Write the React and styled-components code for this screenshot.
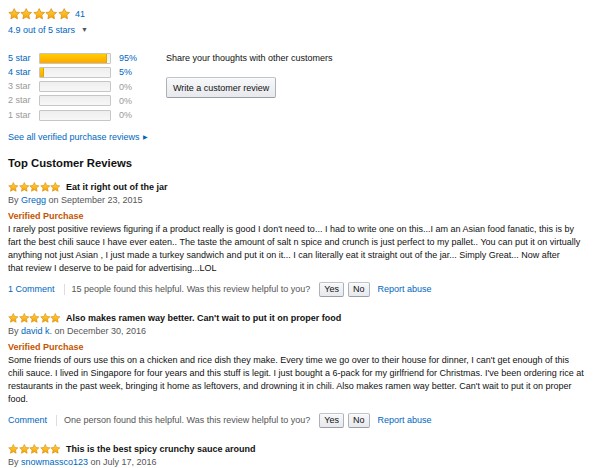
import React from "react";
import styled, { createGlobalStyle } from "styled-components";

const GlobalStyle = createGlobalStyle`
  body {
    margin: 0;
    background: #fff;
    font-family: "Liberation Sans", Arial, sans-serif;
    font-size: 9px;
    color: #111;
  }
`;

const Page = styled.div`
  width: 600px;
  box-sizing: border-box;
  padding: 6px 8px 0;
`;

const Link = styled.a`
  color: #0066c0;
  text-decoration: none;
  cursor: pointer;
`;

const StarLine = styled.div`
  display: flex;
  align-items: center;
  gap: 5px;
  height: 16px;
`;

const StarRow = styled.span`
  display: inline-flex;
  flex-shrink: 0;
`;

const RatingText = styled.div`
  margin-top: 1px;
  line-height: 13px;
  color: #0066c0;

  .caret {
    display: inline-block;
    margin-left: 6px;
    font-size: 7px;
    color: #555;
    vertical-align: 1px;
  }
`;

const Breakdown = styled.div`
  display: flex;
  gap: 7px;
  margin-top: 14px;
`;

const Histogram = styled.div`
  display: grid;
  grid-template-columns: 31px 72px 48px;
  grid-auto-rows: 14.25px;
  align-items: center;
`;

const HistLabel = styled.span`
  color: ${(p) => (p.$active ? "#0066c0" : "#999")};
  line-height: 13px;
`;

const Bar = styled.div`
  height: 11px;
  box-sizing: border-box;
  border: 1px solid #c6c6c6;
  border-radius: 1px;
  background: linear-gradient(#eee, #f7f7f7);
  overflow: hidden;
`;

const BarFill = styled.div`
  height: 100%;
  background: linear-gradient(#ffce00, #ffa700);
  border-right: 1px solid #e3a500;
  box-sizing: border-box;
`;

const Percent = styled.span`
  padding-left: 8px;
  color: ${(p) => (p.$active ? "#0066c0" : "#999")};
`;

const ShareBox = styled.div`
  display: flex;
  flex-direction: column;
  align-items: flex-start;

  p {
    margin: 0;
    line-height: 14px;
    color: #111;
  }
`;

const Button = styled.button`
  font-family: inherit;
  font-size: 9px;
  color: #111;
  height: ${(p) => (p.$small ? "15px" : "21px")};
  padding: ${(p) => (p.$small ? "0 4px" : "0 6px")};
  border: 1px solid #adb1b8;
  border-top-color: #c1c4c9;
  border-bottom-color: #9a9ea5;
  border-radius: 2px;
  background: linear-gradient(#f7f8fa, #e7e9ec);
  box-shadow: 0 1px 0 rgba(255, 255, 255, 0.6) inset;
  cursor: pointer;
  margin-top: ${(p) => (p.$small ? "0" : "12px")};
`;

const SeeAll = styled(Link)`
  display: block;
  margin-top: 9px;
  line-height: 13px;

  .arrow {
    font-size: 6px;
    margin-left: 3px;
    vertical-align: 1px;
  }
`;

const Heading = styled.h3`
  margin: 12px 0 0;
  font-size: 11.3px;
  line-height: 14px;
  font-weight: bold;
  color: #111;
`;

const ReviewList = styled.div`
  margin-top: 10px;
  display: flex;
  flex-direction: column;
  gap: 14px;
`;

const Review = styled.div``;

const TitleRow = styled.div`
  display: flex;
  align-items: center;
  gap: 5px;
  height: 14px;
  font-weight: bold;
`;

const Byline = styled.div`
  line-height: 13px;
  color: #555;
`;

const Verified = styled.div`
  margin-top: 3px;
  line-height: 13px;
  color: #c45500;
  font-weight: bold;
`;

const Body = styled.p`
  margin: 0;
  width: 580px;
  line-height: 13px;
  color: #111;
  white-space: pre-line;
`;

const Footer = styled.div`
  display: flex;
  align-items: center;
  height: 16px;
  margin-top: 6px;
  color: #555;
`;

const Divider = styled.span`
  width: 1px;
  height: 11px;
  background: #ddd;
  margin: 0 7px 0 9px;
`;

const Votes = styled.span`
  display: inline-flex;
  gap: 4px;
  margin: 0 8px 0 9px;
`;

const Star = ({ size }) => (
  <svg width={size} height={size * 0.92} viewBox="0 0 20 19">
    <defs>
      <linearGradient id="sg" x1="0" y1="0" x2="0" y2="1">
        <stop offset="0" stopColor="#ffd24a" />
        <stop offset="1" stopColor="#f5a300" />
      </linearGradient>
    </defs>
    <path
      d="M10 1l2.7 5.7 6.2.8-4.6 4.3 1.2 6.2L10 15l-5.5 3 1.2-6.2L1.1 7.5l6.2-.8z"
      fill="url(#sg)"
      stroke="#d9890a"
      strokeWidth="1.2"
      strokeLinejoin="round"
    />
  </svg>
);

const Stars = ({ size }) => (
  <StarRow>
    {[0, 1, 2, 3, 4].map((i) => (
      <Star key={i} size={size} />
    ))}
  </StarRow>
);

const histogram = [
  { label: "5 star", pct: 95 },
  { label: "4 star", pct: 5 },
  { label: "3 star", pct: 0 },
  { label: "2 star", pct: 0 },
  { label: "1 star", pct: 0 },
];

const reviews = [
  {
    title: "Eat it right out of the jar",
    author: "Gregg",
    date: "September 23, 2015",
    text:
      "I rarely post positive reviews figuring if a product really is good I don't need to... I had to write one on this...I am an Asian food fanatic, this is by fart the best chili sauce I have ever eaten.. The taste the amount of salt n spice and crunch is just perfect to my pallet.. You can put it on virtually anything not just Asian , I just made a turkey sandwich and put it on it... I can literally eat it straight out of the jar... Simply Great... Now after\nthat review I deserve to be paid for advertising...LOL",
    comments: "1 Comment",
    helpful: "15 people found this helpful.",
  },
  {
    title: "Also makes ramen way better. Can't wait to put it on proper food",
    author: "david k.",
    date: "December 30, 2016",
    text:
      "Some friends of ours use this on a chicken and rice dish they make. Every time we go over to their house for dinner, I can't get enough of this\nchili sauce. I lived in Singapore for four years and this stuff is legit. I just bought a 6-pack for my girlfriend for Christmas. I've been ordering rice at restaurants in the past week, bringing it home as leftovers, and drowning it in chili. Also makes ramen way better. Can't wait to put it on proper food.",
    comments: "Comment",
    helpful: "One person found this helpful.",
  },
  {
    title: "This is the best spicy crunchy sauce around",
    author: "snowmassco123",
    date: "July 17, 2016",
  },
];

export default function App() {
  return (
    <Page>
      <GlobalStyle />
      <StarLine>
        <Stars size={12.4} />
        <Link>41</Link>
      </StarLine>
      <RatingText>
        4.9 out of 5 stars<span className="caret">▼</span>
      </RatingText>

      <Breakdown>
        <Histogram>
          {histogram.map((row) => (
            <React.Fragment key={row.label}>
              <HistLabel $active={row.pct > 0}>{row.label}</HistLabel>
              <Bar>
                <BarFill style={{ width: `${row.pct}%`, borderRightWidth: row.pct ? 1 : 0 }} />
              </Bar>
              <Percent $active={row.pct > 0}>{row.pct}%</Percent>
            </React.Fragment>
          ))}
        </Histogram>
        <ShareBox>
          <p>Share your thoughts with other customers</p>
          <Button>Write a customer review</Button>
        </ShareBox>
      </Breakdown>

      <SeeAll>
        See all verified purchase reviews<span className="arrow">▶</span>
      </SeeAll>

      <Heading>Top Customer Reviews</Heading>

      <ReviewList>
        {reviews.map((r) => (
          <Review key={r.title}>
            <TitleRow>
              <Stars size={10.6} />
              <span>{r.title}</span>
            </TitleRow>
            <Byline>
              By <Link>{r.author}</Link> on {r.date}
            </Byline>
            {r.text && (
              <>
                <Verified>Verified Purchase</Verified>
                <Body>{r.text}</Body>
                <Footer>
                  <Link>{r.comments}</Link>
                  <Divider />
                  <span>{r.helpful} Was this review helpful to you?</span>
                  <Votes>
                    <Button $small>Yes</Button>
                    <Button $small>No</Button>
                  </Votes>
                  <Link>Report abuse</Link>
                </Footer>
              </>
            )}
          </Review>
        ))}
      </ReviewList>
    </Page>
  );
}
